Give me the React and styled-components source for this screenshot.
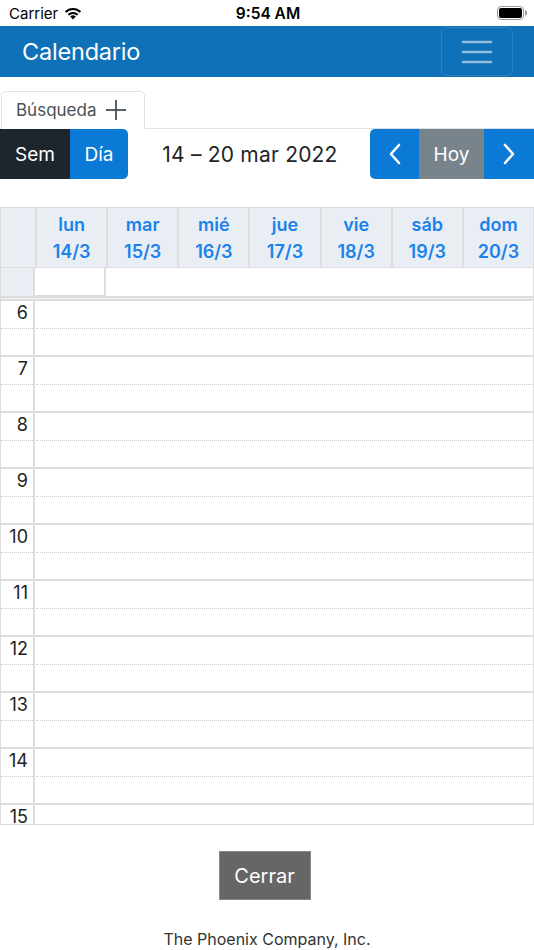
import React from "react";
import styled, { createGlobalStyle } from "styled-components";

const Global = createGlobalStyle`
  html, body { margin: 0; padding: 0; background: #fff; }
  body { font-family: Inter, "Noto Sans", "Liberation Sans", sans-serif; color: #212529; }
  * { box-sizing: border-box; }
`;

const Page = styled.div`
  width: 534px;
  height: 950px;
  display: flex;
  flex-direction: column;
  overflow: hidden;
`;

const StatusBar = styled.div`
  height: 26px;
  display: grid;
  grid-template-columns: 1fr auto 1fr;
  align-items: center;
  padding: 0 7px 0 9px;
  font-size: 15px;
  color: #000;
`;
const StatusLeft = styled.div`
  display: flex;
  align-items: center;
  gap: 5px;
`;
const StatusTime = styled.div`
  font-weight: 600;
  font-size: 15.5px;
`;
const StatusRight = styled.div`
  display: flex;
  justify-content: flex-end;
  align-items: center;
`;

const NavBar = styled.div`
  height: 51px;
  background: #0f72b9;
  display: flex;
  align-items: center;
  justify-content: space-between;
  padding: 0 21px 0 22px;
`;
const Brand = styled.div`
  color: #fff;
  font-size: 23.5px;
  font-weight: 400;
  letter-spacing: -0.2px;
`;
const Toggler = styled.button`
  width: 72px;
  height: 49px;
  border: 1px solid rgba(255, 255, 255, 0.12);
  border-radius: 6px;
  background: transparent;
  display: flex;
  align-items: center;
  justify-content: center;
  padding: 0;
`;

const Tabs = styled.div`
  margin-top: 14px;
  display: flex;
  border-bottom: 1px solid #dee2e6;
  padding-left: 1px;
`;
const Tab = styled.div`
  width: 144px;
  height: 38px;
  margin-bottom: -1px;
  border: 1px solid #dee2e6;
  border-bottom-color: #fff;
  border-radius: 5px 5px 0 0;
  display: flex;
  align-items: center;
  gap: 9px;
  padding-left: 14px;
  font-size: 17px;
  color: #495057;
`;

const Toolbar = styled.div`
  height: 50px;
  display: flex;
  align-items: center;
  justify-content: space-between;
`;
const Group = styled.div`
  display: flex;
  height: 50px;
  border-radius: ${(p) => p.$radius || "0"};
  overflow: hidden;
`;
const Btn = styled.div`
  height: 50px;
  width: ${(p) => p.$w}px;
  background: ${(p) => p.$bg};
  color: ${(p) => p.$fg || "#fff"};
  display: flex;
  align-items: center;
  justify-content: center;
  font-size: 19px;
`;
const DateTitle = styled.div`
  font-size: 21px;
  color: #212529;
  flex: 1;
  text-align: center;
  padding-left: 2px;
  letter-spacing: 0.2px;
`;

const Calendar = styled.div`
  margin-top: 28px;
  height: 618px;
  border: 1px solid #ddd;
  display: flex;
  flex-direction: column;
`;
const HeaderRow = styled.div`
  display: grid;
  grid-template-columns: 34px repeat(7, 1fr);
  height: 60px;
  background: #e9eef4;
  border-bottom: 1px solid #ddd;
`;
const HeadCell = styled.div`
  border-left: ${(p) => (p.$first ? "none" : "2px solid #ddd")};
  display: flex;
  flex-direction: column;
  align-items: center;
  justify-content: center;
  color: #1a82ea;
  font-weight: 600;
  font-size: 18px;
  line-height: 27px;
`;
const AllDayRow = styled.div`
  display: grid;
  grid-template-columns: 34px 71px 1fr;
  height: 28px;
`;
const AxisCell = styled.div`
  background: #e9eef4;
  border-right: 2px solid #ddd;
`;
const DayCell = styled.div`
  border-right: ${(p) => (p.$bordered ? "2px solid #ddd" : "none")};
  border-bottom: ${(p) => (p.$bordered ? "1px solid #ddd" : "none")};
`;
const Divider = styled.div`
  height: 5px;
  background: #f2f2f2;
  border-top: 2px solid #ddd;
  border-bottom: 2px solid #ddd;
`;
const Slots = styled.div`
  flex: 1;
  min-height: 0;
  overflow: hidden;
  display: flex;
  flex-direction: column;
`;
const Hour = styled.div`
  flex: 0 0 56px;
  height: 56px;
  display: grid;
  grid-template-columns: 34px 1fr;
  grid-template-rows: 28px 26px;
  border-bottom: 2px solid #ddd;
`;
const HourLabel = styled.div`
  grid-row: 1 / 3;
  grid-column: 1;
  border-right: 2px solid #ddd;
  text-align: right;
  padding: 1px 5px 0 0;
  font-size: 18px;
  line-height: 22px;
  color: #222;
`;
const HalfLine = styled.div`
  grid-column: 1 / 3;
  grid-row: 1;
  border-bottom: 1px dotted #ccc;
`;

const Footer = styled.div`
  display: flex;
  flex-direction: column;
  align-items: center;
`;
const CloseBtn = styled.div`
  margin-top: 26px;
  margin-right: 5px;
  width: 92px;
  height: 49px;
  background: #666;
  border: 1px solid #888;
  color: #fff;
  font-size: 20px;
  display: flex;
  align-items: center;
  justify-content: center;
`;
const Copyright = styled.div`
  margin-top: 29px;
  font-size: 16px;
  color: #333;
`;

const Wifi = () => (
  <svg width="20" height="14" viewBox="0 0 20 14">
    <path d="M10 13.5 L7.2 10.6 A4 4 0 0 1 12.8 10.6 Z" fill="#000" />
    <path d="M4.6 8.1 A7.7 7.7 0 0 1 15.4 8.1 L13.9 9.6 A5.6 5.6 0 0 0 6.1 9.6 Z" fill="#000" />
    <path d="M1.8 5.3 A11.6 11.6 0 0 1 18.2 5.3 L16.7 6.8 A9.5 9.5 0 0 0 3.3 6.8 Z" fill="#000" />
  </svg>
);

const Battery = () => (
  <svg width="30" height="14" viewBox="0 0 30 14">
    <rect x="0.5" y="0.5" width="26" height="13" rx="3.5" fill="none" stroke="#999" />
    <rect x="2" y="2" width="23" height="10" rx="2" fill="#000" />
    <path d="M28 4.5 v5 a2 2 0 0 0 0 -5z" fill="#999" />
  </svg>
);

const Hamburger = () => (
  <svg width="32" height="26" viewBox="0 0 32 26">
    <g stroke="rgba(255,255,255,0.55)" strokeWidth="2.4" strokeLinecap="round">
      <line x1="2" y1="3" x2="30" y2="3" />
      <line x1="2" y1="13" x2="30" y2="13" />
      <line x1="2" y1="23" x2="30" y2="23" />
    </g>
  </svg>
);

const Plus = () => (
  <svg width="22" height="22" viewBox="0 0 22 22">
    <g stroke="#495057" strokeWidth="1.8">
      <line x1="11" y1="1" x2="11" y2="21" />
      <line x1="1" y1="11" x2="21" y2="11" />
    </g>
  </svg>
);

const Chevron = ({ dir }) => (
  <svg width="14" height="22" viewBox="0 0 14 22">
    <path
      d={dir === "left" ? "M11 2 L3 11 L11 20" : "M3 2 L11 11 L3 20"}
      fill="none"
      stroke="#fff"
      strokeWidth="2.6"
      strokeLinecap="round"
      strokeLinejoin="round"
    />
  </svg>
);

const days = [
  ["lun", "14/3"],
  ["mar", "15/3"],
  ["mié", "16/3"],
  ["jue", "17/3"],
  ["vie", "18/3"],
  ["sáb", "19/3"],
  ["dom", "20/3"],
];
const hours = [6, 7, 8, 9, 10, 11, 12, 13, 14, 15];

export default function App() {
  return (
    <Page>
      <Global />
      <StatusBar>
        <StatusLeft>
          Carrier <Wifi />
        </StatusLeft>
        <StatusTime>9:54 AM</StatusTime>
        <StatusRight>
          <Battery />
        </StatusRight>
      </StatusBar>
      <NavBar>
        <Brand>Calendario</Brand>
        <Toggler>
          <Hamburger />
        </Toggler>
      </NavBar>
      <Tabs>
        <Tab>
          Búsqueda <Plus />
        </Tab>
      </Tabs>
      <Toolbar>
        <Group $radius="0 5px 5px 0">
          <Btn $w={70} $bg="#1d252d">Sem</Btn>
          <Btn $w={58} $bg="#0a7ad6">Día</Btn>
        </Group>
        <DateTitle>14 – 20 mar 2022</DateTitle>
        <Group $radius="5px 0 0 5px">
          <Btn $w={49} $bg="#0a7ad6">
            <Chevron dir="left" />
          </Btn>
          <Btn $w={65} $bg="#79838c">Hoy</Btn>
          <Btn $w={50} $bg="#0a7ad6">
            <Chevron dir="right" />
          </Btn>
        </Group>
      </Toolbar>
      <Calendar>
        <HeaderRow>
          <HeadCell $first />
          {days.map(([d, n]) => (
            <HeadCell key={d}>
              <span>{d}</span>
              <span>{n}</span>
            </HeadCell>
          ))}
        </HeaderRow>
        <AllDayRow>
          <AxisCell />
          <DayCell $bordered />
          <DayCell />
        </AllDayRow>
        <Divider />
        <Slots>
          {hours.map((h) => (
            <Hour key={h}>
              <HalfLine />
              <HourLabel>{h}</HourLabel>
            </Hour>
          ))}
        </Slots>
      </Calendar>
      <Footer>
        <CloseBtn>Cerrar</CloseBtn>
        <Copyright>The Phoenix Company, Inc.</Copyright>
      </Footer>
    </Page>
  );
}
